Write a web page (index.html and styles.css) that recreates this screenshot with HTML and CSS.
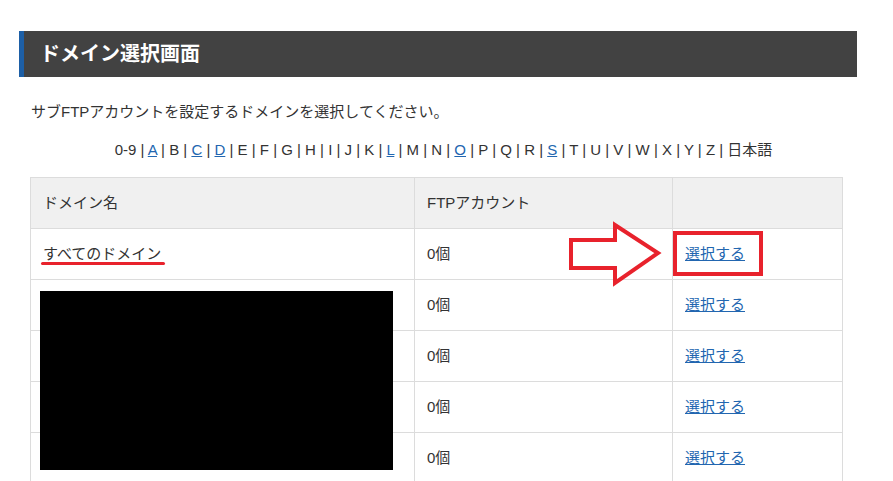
FILE: index.html
```html
<!DOCTYPE html>
<html lang="ja">
<head>
    <meta charset="UTF-8">
    <title>ドメイン選択画面</title>
    <link rel="stylesheet" href="styles.css">
</head>
<body>
    <div class="page">
        <h2 class="title">ドメイン選択画面</h2>

        <p class="lead">サブFTPアカウントを設定するドメインを選択してください。</p>

        <p class="index">0-9 | <a href="#">A</a> | B | <a href="#">C</a> | <a href="#">D</a> | E | F | G | H | I | J | K | <a href="#">L</a> | M | N | <a href="#">O</a> | P | Q | R | <a href="#">S</a> | T | U | V | W | X | Y | Z | 日本語</p>

        <div class="table-wrap">
            <table class="domains">
                <tr>
                    <th class="col-name">ドメイン名</th>
                    <th class="col-ftp">FTPアカウント</th>
                    <th class="col-act"></th>
                </tr>
                <tr>
                    <td>すべてのドメイン</td>
                    <td>0個</td>
                    <td><a href="#">選択する</a></td>
                </tr>
                <tr>
                    <td></td>
                    <td>0個</td>
                    <td><a href="#">選択する</a></td>
                </tr>
                <tr>
                    <td></td>
                    <td>0個</td>
                    <td><a href="#">選択する</a></td>
                </tr>
                <tr>
                    <td></td>
                    <td>0個</td>
                    <td><a href="#">選択する</a></td>
                </tr>
                <tr>
                    <td></td>
                    <td>0個</td>
                    <td><a href="#">選択する</a></td>
                </tr>
            </table>

            <!-- 注釈 -->
            <div class="redact"></div>
            <div class="mark-line"></div>
            <div class="mark-box"></div>
            <svg class="mark-arrow" width="96" height="68" viewBox="0 0 96 68">
                <polygon points="4,20 48,20 48,5 91,33 48,63 48,48 4,48" fill="none" stroke="#e8222c" stroke-width="4" stroke-linejoin="miter"/>
            </svg>
        </div>
    </div>
</body>
</html>
```

FILE: styles.css
```css
body { margin: 0; background: #fff; color: #333; font-family: "Liberation Sans", "Noto Sans CJK JP", sans-serif; font-size: 15px; }
.page { padding: 31px 36px 0 19px; }

.title {
    margin: 0;
    height: 46px;
    line-height: 46px;
    padding-left: 16px;
    background-color: #424242;
    border-left: 5px solid #1d5fa6;
    color: #fff;
    font-size: 20px;
    font-weight: bold;
}

.lead { margin: 25px 0 0 12px; line-height: 20px; }
.index { margin: 18px 0 0 0; line-height: 20px; text-align: center; padding-left: 11px; }

a { color: #2266b0; }

.table-wrap { position: relative; margin: 17px 14px 0 11px; }

.domains { width: 813px; border-collapse: collapse; table-layout: fixed; }
.domains th, .domains td {
    height: 47px;
    padding: 0 12px 3px;
    border: 1px solid #dcdcdc;
    text-align: left;
    font-weight: normal;
    vertical-align: middle;
}
.domains th { background-color: #f0f0f0; }
.col-name { width: 359px; }
.col-ftp { width: 233px; }

/* 黒塗り */
.redact { position: absolute; left: 10px; top: 114px; width: 353px; height: 179px; background: #000; }

/* 赤い注釈 */
.mark-line { position: absolute; left: 11px; top: 85px; width: 124px; height: 3px; background: #e8222c; border-radius: 2px; }
.mark-box { position: absolute; left: 643px; top: 54px; width: 82px; height: 37px; border: 4px solid #e8222c; }
.mark-arrow { position: absolute; left: 537px; top: 43px; }
```
